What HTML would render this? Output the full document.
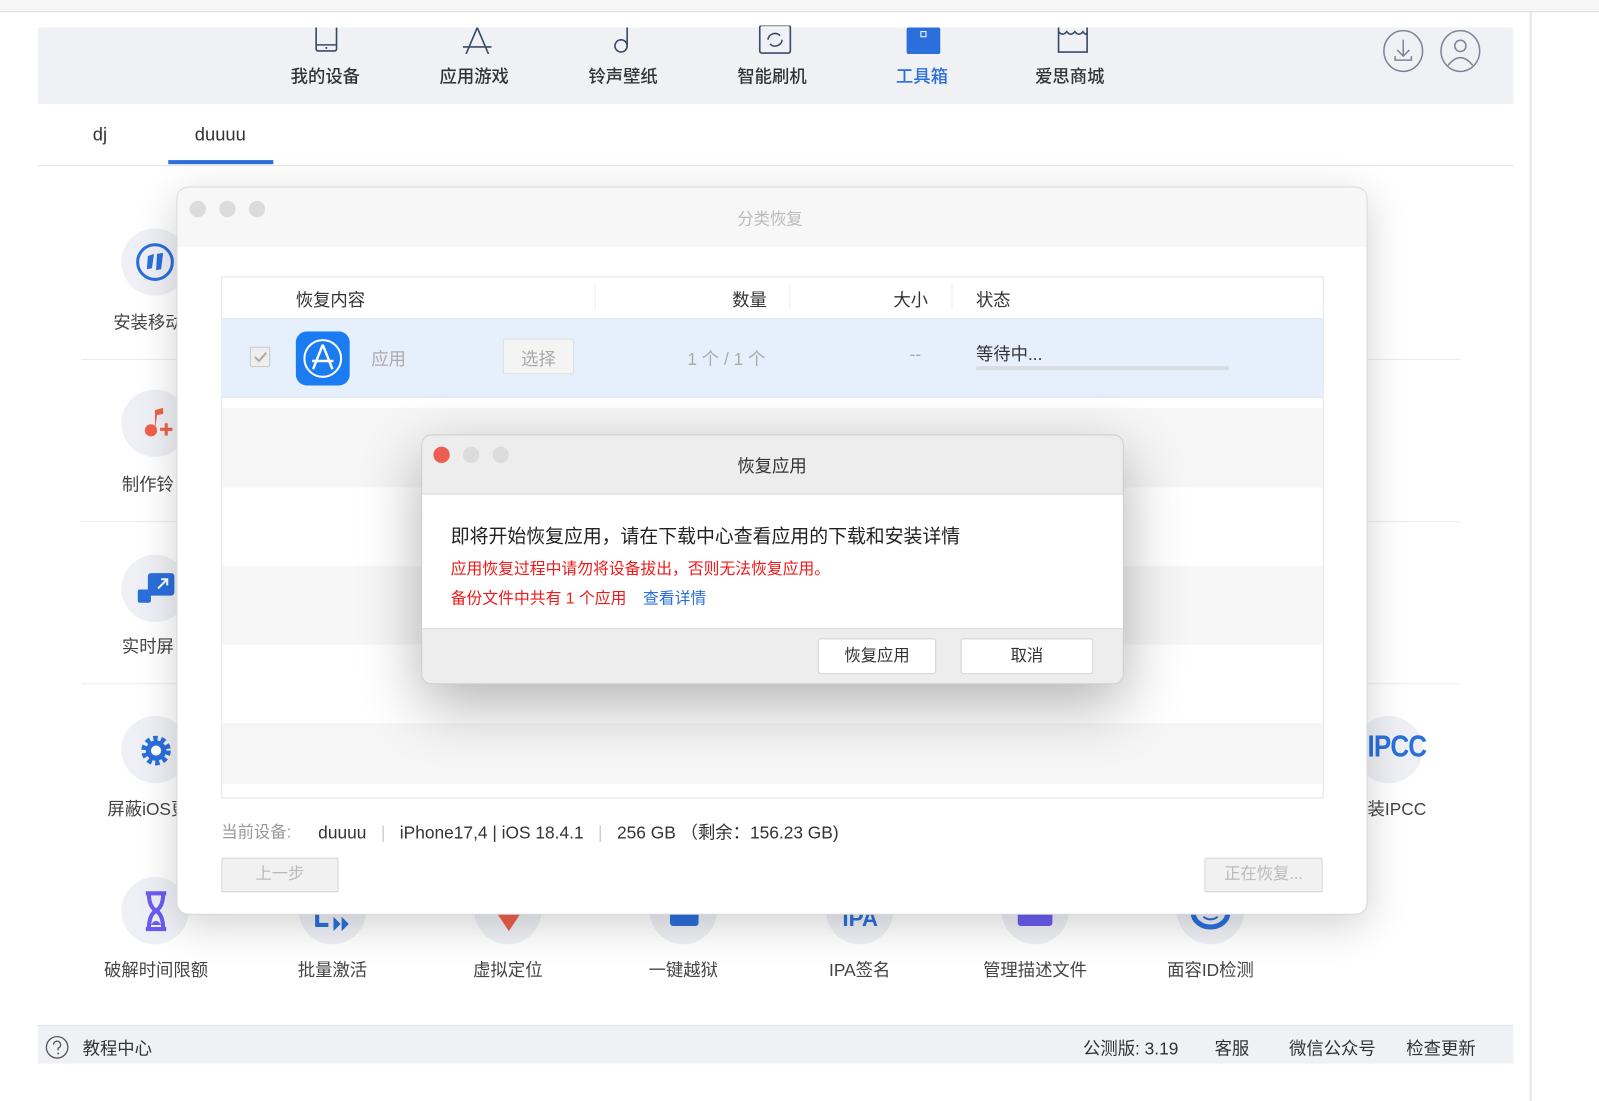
<!DOCTYPE html>
<html><head><meta charset="utf-8"><style>
*{margin:0;padding:0;box-sizing:border-box}
body{width:1599px;height:1080px;background:#fff;position:relative;overflow:hidden;font-family:"Liberation Sans","Noto Sans CJK SC",sans-serif;color:#333}
#w{position:absolute;left:0;top:0;width:1568px;height:1059px;transform:scale(1.0198);transform-origin:0 0}
.a{position:absolute}
.t{position:absolute;white-space:nowrap}
.circ{position:absolute;width:66px;height:66px;border-radius:50%;background:#eef0f5}
.lbl{position:absolute;font-size:17px;color:#444;transform:translateX(-50%);white-space:nowrap}
.nav{position:absolute;font-size:17px;color:#333;transform:translateX(-50%);top:61px;font-weight:500}
.tl{position:absolute;width:16px;height:16px;border-radius:50%;background:#dcdcdc}
.btn{position:absolute;background:#fff;border:1px solid #d4d4d4;border-radius:3px;font-size:16px;color:#333;text-align:center}
</style></head><body><div id="w">
<div class="a" style="left:0;top:0;width:1568px;height:12px;background:#f6f6f6;border-bottom:1px solid #ddd"></div>
<div class="a" style="left:1500px;top:12px;width:2px;height:1068px;background:#e6e6e6"></div>
<!-- nav -->
<div class="a" style="left:37px;top:27px;width:1447px;height:75px;background:#eff1f4"></div>
<svg class="a" style="left:300px;top:27px" width="40" height="26"><rect x="10" y="-4" width="20" height="27" rx="2" fill="none" stroke="#3a4a66" stroke-width="1.6"/><line x1="10" y1="17" x2="30" y2="17" stroke="#3a4a66" stroke-width="1.4"/><circle cx="20" cy="20" r="1" fill="#3a4a66"/></svg>
<svg class="a" style="left:448px;top:27px" width="40" height="26"><path d="M20 0 L9 26 M20 0 L31 26 M6 19 H34" stroke="#3a4a66" stroke-width="1.6" fill="none"/></svg>
<svg class="a" style="left:594px;top:25px" width="40" height="28"><circle cx="15" cy="20" r="6" fill="none" stroke="#3a4a66" stroke-width="1.6"/><path d="M21 20 V2" stroke="#3a4a66" stroke-width="1.6"/></svg>
<svg class="a" style="left:740px;top:25px" width="40" height="28"><rect x="5" y="0" width="30" height="27" rx="2" fill="none" stroke="#3a4a66" stroke-width="1.6"/><path d="M13 14 a7 7 0 0 1 12 -4 M27 14 a7 7 0 0 1 -12 4" stroke="#3a4a66" stroke-width="1.5" fill="none"/></svg>
<svg class="a" style="left:886px;top:27px" width="40" height="26"><rect x="3" y="0" width="33" height="26" rx="2" fill="#2a6fdb"/><rect x="17" y="4" width="5" height="5" fill="none" stroke="#fff" stroke-width="1"/></svg>
<svg class="a" style="left:1032px;top:27px" width="40" height="26"><path d="M6 0 V24 H34 V0 M6 4 Q10 9 14 4 Q18 9 22 4 Q26 9 30 4 Q33 9 34 4 M14 -1 H26" stroke="#3a4a66" stroke-width="1.6" fill="none"/></svg>
<div class="nav" style="left:319px">我的设备</div>
<div class="nav" style="left:465px">应用游戏</div>
<div class="nav" style="left:611px">铃声壁纸</div>
<div class="nav" style="left:757px">智能刷机</div>
<div class="nav" style="left:904px;color:#2a6fdb">工具箱</div>
<div class="nav" style="left:1049px">爱思商城</div>
<svg class="a" style="left:1354px;top:29px" width="100" height="44"><ellipse cx="22" cy="21" rx="19" ry="20" fill="none" stroke="#7d8698" stroke-width="1.5"/><path d="M22 10 V25 M16 20 L22 26 L28 20 M14 26 V30 H30 V26" stroke="#7d8698" stroke-width="1.5" fill="none"/><ellipse cx="78" cy="21" rx="19" ry="20" fill="none" stroke="#7d8698" stroke-width="1.5"/><circle cx="78" cy="16" r="5.5" fill="none" stroke="#7d8698" stroke-width="1.5"/><path d="M66 35 Q78 20 90 35" stroke="#7d8698" stroke-width="1.5" fill="none"/></svg>
<!-- tabs -->
<div class="t" style="left:91px;top:122px;font-size:18px;color:#333">dj</div>
<div class="t" style="left:191px;top:122px;font-size:18px;color:#333">duuuu</div>
<div class="a" style="left:165px;top:157px;width:103px;height:4px;background:#2a6fdb"></div>
<div class="a" style="left:37px;top:162px;width:1447px;height:1px;background:#e2e2e2"></div>
<!-- sidebar -->
<div class="a" style="left:80px;top:352px;width:1352px;height:1px;background:#ececec"></div>
<div class="a" style="left:80px;top:511px;width:1352px;height:1px;background:#ececec"></div>
<div class="a" style="left:80px;top:670px;width:1352px;height:1px;background:#ececec"></div>
<div class="circ" style="left:119px;top:224px"></div>
<svg class="a" style="left:132px;top:237px" width="40" height="40"><circle cx="20" cy="20" r="17" fill="none" stroke="#2a6fdb" stroke-width="3"/><path d="M13 14 L19 12 L17 26 L12 27Z M22 12 L28 11 L26 27 L21 28Z" fill="#2a6fdb"/></svg>
<div class="lbl" style="left:145px;top:302px">安装移动</div>
<div class="circ" style="left:119px;top:382px"></div>
<svg class="a" style="left:135px;top:396px" width="40" height="40"><circle cx="13" cy="26" r="6" fill="#f0604a"/><path d="M17 26 V6 L25 4 V10 L19 11" fill="#f0604a"/><path d="M28 19 V31 M22 25 H34" stroke="#f0604a" stroke-width="3"/></svg>
<div class="lbl" style="left:145px;top:461px">制作铃</div>
<div class="circ" style="left:119px;top:544px"></div>
<svg class="a" style="left:135px;top:560px" width="40" height="40"><rect x="10" y="2" width="26" height="22" rx="3" fill="#2a6fdb"/><rect x="0" y="18" width="13" height="13" rx="2" fill="#2a6fdb"/><path d="M20 17 L29 8 M23 8 H29 V14" stroke="#fff" stroke-width="2" fill="none"/></svg>
<div class="lbl" style="left:145px;top:620px">实时屏</div>
<div class="circ" style="left:119px;top:702px"></div>
<svg class="a" style="left:134px;top:717px" width="40" height="40"><circle cx="19" cy="19" r="11" fill="none" stroke="#2a6fdb" stroke-width="7" stroke-dasharray="4 3"/><circle cx="19" cy="19" r="10" fill="#2a6fdb"/><circle cx="19" cy="19" r="5" fill="#fff"/></svg>
<div class="lbl" style="left:145px;top:779px">屏蔽iOS更</div>
<div class="circ" style="left:119px;top:860px"></div>
<svg class="a" style="left:140px;top:873px" width="30" height="42"><path d="M3 3 H23 M3 38 H23 M6 3 Q6 16 13 20 Q6 24 6 38 M20 3 Q20 16 13 20 Q20 24 20 38" stroke="#6b5cf0" stroke-width="4" fill="none"/><path d="M8 34 Q13 26 18 34Z" fill="#6b5cf0"/></svg>
<div class="lbl" style="left:153px;top:937px">破解时间限额</div>
<div class="circ" style="left:293px;top:860px"></div>
<svg class="a" style="left:308px;top:885px" width="40" height="30"><path d="M3 5 V22 H14" stroke="#2a6fdb" stroke-width="4" fill="none"/><path d="M19 14 L26 21 L19 28Z M27 14 L34 21 L27 28Z" fill="#2a6fdb"/></svg>
<div class="lbl" style="left:326px;top:937px">批量激活</div>
<div class="circ" style="left:465px;top:860px"></div>
<svg class="a" style="left:485px;top:895px" width="30" height="20"><path d="M2 0 H26 L14 18Z" fill="#f0604a"/></svg>
<div class="lbl" style="left:498px;top:937px">虚拟定位</div>
<div class="circ" style="left:637px;top:860px"></div>
<div class="a" style="left:657px;top:896px;width:28px;height:12px;background:#2a6fdb;border-radius:0 0 3px 3px"></div>
<div class="lbl" style="left:670px;top:937px">一键越狱</div>
<div class="circ" style="left:810px;top:860px"></div>
<div class="t" style="left:826px;top:888px;font-size:22px;font-weight:bold;color:#2a6fdb;height:20px;overflow:hidden">IPA</div>
<div class="lbl" style="left:843px;top:937px">IPA签名</div>
<div class="circ" style="left:982px;top:860px"></div>
<div class="a" style="left:998px;top:896px;width:34px;height:12px;background:#6b5cf0;border-radius:0 0 3px 3px"></div>
<div class="lbl" style="left:1015px;top:937px">管理描述文件</div>
<div class="circ" style="left:1154px;top:860px"></div>
<svg class="a" style="left:1167px;top:895px" width="40" height="20"><path d="M3 0 A17 14 0 0 0 37 0" stroke="#2a6fdb" stroke-width="5" fill="none"/><path d="M13 4 Q20 9 27 4" stroke="#2a6fdb" stroke-width="2" fill="none"/></svg>
<div class="lbl" style="left:1187px;top:937px">面容ID检测</div>
<div class="circ" style="left:1329px;top:702px"></div>
<div class="t" style="left:1341px;top:716px;font-size:30px;font-weight:bold;color:#2a6fdb;letter-spacing:-1px;transform:scaleX(0.85);transform-origin:left">IPCC</div>
<div class="t" style="left:1341px;top:779px;font-size:17px;color:#444">装IPCC</div>
<!-- footer -->
<div class="a" style="left:37px;top:1005px;width:1447px;height:38px;background:#eff1f4;border-top:1px solid #e2e2e2"></div>
<svg class="a" style="left:44px;top:1015px" width="24" height="24"><circle cx="12" cy="12" r="10.5" fill="none" stroke="#555" stroke-width="1.3"/><path d="M8.5 9.5 a3.5 3.5 0 1 1 4.5 3.3 V15" stroke="#555" stroke-width="1.3" fill="none"/><circle cx="13" cy="18" r="0.9" fill="#555"/></svg>
<div class="t" style="left:81px;top:1014px;font-size:17px;color:#333">教程中心</div>
<div class="t" style="left:1062px;top:1014px;font-size:17px;color:#333">公测版: 3.19</div>
<div class="t" style="left:1191px;top:1014px;font-size:17px;color:#333">客服</div>
<div class="t" style="left:1264px;top:1014px;font-size:17px;color:#333">微信公众号</div>
<div class="t" style="left:1379px;top:1014px;font-size:17px;color:#333">检查更新</div>
<!-- dialog 1 -->
<div class="a" style="left:173px;top:183px;width:1168px;height:714px;background:#fff;border:1px solid #d8d8d8;border-radius:12px;box-shadow:0 10px 40px rgba(0,0,0,0.18);overflow:hidden">
 <div class="a" style="left:0;top:0;width:1168px;height:58px;background:#f7f7f7"></div>
 <div class="tl" style="left:12px;top:13px"></div><div class="tl" style="left:41px;top:13px"></div><div class="tl" style="left:70px;top:13px"></div>
 <div class="t" style="left:549px;top:17px;font-size:16px;color:#bbb">分类恢复</div>
 <div class="a" style="left:43px;top:87px;width:1081px;height:512px;border:1px solid #e4e4e4;background:#fff">
  <div class="a" style="left:0;top:128px;width:1079px;height:78px;background:#f6f6f6"></div>
  <div class="a" style="left:0;top:283px;width:1079px;height:77px;background:#f6f6f6"></div>
  <div class="a" style="left:0;top:437px;width:1079px;height:60px;background:#f6f6f6"></div>
  <div class="a" style="left:0;top:40px;width:1079px;height:78px;background:#e6f0fc;border-top:1px solid #dde5f0;border-bottom:1px solid #dde5f0"></div>
 </div>
</div>
<div class="t" style="left:290px;top:280px;font-size:17px;color:#333">恢复内容</div>
<div class="a" style="left:583px;top:278px;width:1px;height:26px;background:#eee"></div>
<div class="t" style="left:718px;top:280px;font-size:17px;color:#333">数量</div>
<div class="a" style="left:774px;top:278px;width:1px;height:26px;background:#eee"></div>
<div class="t" style="left:876px;top:280px;font-size:17px;color:#333">大小</div>
<div class="a" style="left:933px;top:278px;width:1px;height:26px;background:#eee"></div>
<div class="t" style="left:957px;top:280px;font-size:17px;color:#333">状态</div>
<div class="a" style="left:245px;top:340px;width:20px;height:20px;border:1px solid #c8c8c8;background:#eee;border-radius:2px"></div>
<svg class="a" style="left:247px;top:342px" width="16" height="16"><path d="M3 8 L7 12 L14 4" stroke="#aaa" stroke-width="2" fill="none"/></svg>
<svg class="a" style="left:290px;top:325px" width="53" height="53"><rect width="53" height="53" rx="11" fill="#1a7cf0"/><circle cx="26.5" cy="26.5" r="18" fill="none" stroke="#fff" stroke-width="2"/><path d="M26.5 13 L17 37 M26.5 13 L36 37 M16 29 H37" stroke="#fff" stroke-width="2.4" fill="none"/></svg>
<div class="t" style="left:364px;top:338px;font-size:17px;color:#aaa">应用</div>
<div class="a" style="left:493px;top:332px;width:70px;height:35px;background:#f4f4f4;border:1px solid #ddd;border-radius:2px"></div>
<div class="t" style="left:511px;top:338px;font-size:17px;color:#aaa">选择</div>
<div class="t" style="left:674px;top:338px;font-size:17px;color:#aaa">1 个 / 1 个</div>
<div class="t" style="left:892px;top:338px;font-size:17px;color:#aaa">--</div>
<div class="t" style="left:957px;top:333px;font-size:17px;color:#333">等待中...</div>
<div class="a" style="left:957px;top:359px;width:248px;height:4px;background:#d8dbe0;border-radius:2px"></div>
<div class="t" style="left:217px;top:802px;font-size:16px;color:#999">当前设备:</div>
<div class="t" style="left:312px;top:802px;font-size:17px;color:#333">duuuu &nbsp;&nbsp;<span style="color:#ccc">|</span>&nbsp;&nbsp; iPhone17,4 | iOS 18.4.1 &nbsp;&nbsp;<span style="color:#ccc">|</span>&nbsp;&nbsp; 256 GB （剩余：156.23 GB)</div>
<div class="a" style="left:217px;top:841px;width:115px;height:34px;background:#f1f1f1;border:1px solid #d6d6d6;border-radius:2px;font-size:16px;color:#bbb;text-align:center;line-height:32px">上一步</div>
<div class="a" style="left:1181px;top:841px;width:116px;height:34px;background:#f1f1f1;border:1px solid #d6d6d6;border-radius:2px;font-size:16px;color:#bbb;text-align:center;line-height:32px">正在恢复...</div>
<!-- dialog 2 -->
<div class="a" style="left:413px;top:426px;width:689px;height:245px;background:#ededee;border:1px solid #cfcfcf;border-radius:10px;box-shadow:0 20px 60px rgba(0,0,0,0.3);overflow:hidden">
 <div class="a" style="left:0;top:57px;width:689px;height:133px;background:#fff;border-top:1px solid #d9d9d9;border-bottom:1px solid #d9d9d9"></div>
 <div class="tl" style="left:11px;top:11px;background:#ec5e52"></div><div class="tl" style="left:40px;top:11px"></div><div class="tl" style="left:69px;top:11px"></div>
 <div class="t" style="left:309px;top:16px;font-size:17px;color:#333">恢复应用</div>
 <div class="t" style="left:28px;top:85px;font-size:18.5px;color:#222">即将开始恢复应用，请在下载中心查看应用的下载和安装详情</div>
 <div class="t" style="left:28px;top:119px;font-size:15.5px;color:#f01818">应用恢复过程中请勿将设备拔出，否则无法恢复应用。</div>
 <div class="t" style="left:28px;top:148px;font-size:15.5px;color:#f01818">备份文件中共有 1 个应用 <span style="color:#2a6fdb;margin-left:12px">查看详情</span></div>
 <div class="btn" style="left:388px;top:199px;width:116px;height:35px;line-height:33px">恢复应用</div>
 <div class="btn" style="left:528px;top:199px;width:130px;height:35px;line-height:33px">取消</div>
</div>
</div></body></html>
